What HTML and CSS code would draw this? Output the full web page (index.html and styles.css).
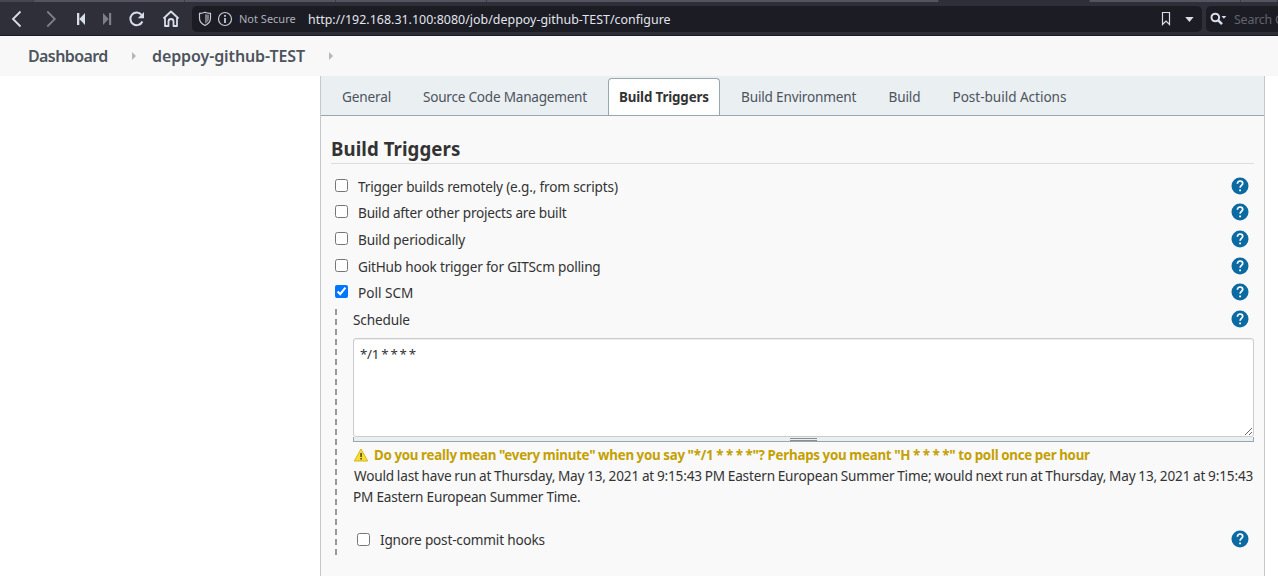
FILE: index.html
```html
<!DOCTYPE html>
<html lang="en">
<head>
<meta charset="utf-8">
<title>deppoy-github-TEST Config</title>
<link rel="stylesheet" href="styles.css">
</head>
<body>
<svg class="defs" width="0" height="0">
  <symbol id="help" viewBox="0 0 18 18"><circle cx="9" cy="9" r="8.5" fill="#0b6aa2"/><path d="M6.400 6.700C6.400 5.100 7.500 4 9.100 4s2.600 1 2.600 2.400c0 1.900-2.600 2.200-2.600 4.300" fill="none" stroke="#fff" stroke-width="1.700"/><path d="M8.200 12.400h1.800v1.800H8.200z" fill="#fff"/></symbol>
</svg>
<header class="browser">
  <div class="tabstrip"><i class="tab t1"></i><i class="tab t2"></i><i class="tab t3"></i><i class="tab t4"></i><i class="tab t5"></i><i class="tab active"></i><i class="tab t7"></i><i class="tab t8"></i></div>
  <div class="toolbar">
    <svg class="nav" width="192" height="26" viewBox="0 6 192 26" fill="none">
      <path d="M20.500 11.500l-7.500 7.500 7.500 7.500" stroke="#d8dee9" stroke-width="1.800"/>
      <path d="M47.300 11.500l7.500 7.500-7.500 7.500" stroke="#7c7f88" stroke-width="1.800"/>
      <path d="M77 13h2.300v12H77zM85 13v12l-5.700-6z" fill="#d8dee9"/>
      <path d="M109 13h2.200v12H109zM103 13v12l5.700-6z" fill="#7c7f88"/>
      <path d="M141.500 14.800A6.300 6.300 0 1 0 142.400 21.500" stroke="#d8dee9" stroke-width="2"/>
      <path d="M144 12v6.200h-6.200z" fill="#d8dee9"/>
      <path d="M163.500 18.500l7.500-7 7.500 7M165 18v8h3.500v-4.500a2.500 2.500 0 0 1 5 0V26h3.500v-8" stroke="#d8dee9" stroke-width="1.800" stroke-linejoin="round"/>
    </svg>
    <div class="address">
      <svg width="47" height="26" viewBox="192 6 47 26" fill="none">
        <path d="M199.500 13.300c2 .1 3.800-.2 5.500-1 1.700.8 3.500 1.100 5.500 1v5c0 3.200-2 5.500-5.500 7.200-3.500-1.700-5.500-4-5.500-7.200z" stroke="#c4c9d3" stroke-width="1.200"/>
        <path d="M205 14c1.300.5 2.500.8 4 .8v3.500c0 2.400-1.300 4-4 5.500z" fill="#777b85"/>
        <circle cx="225" cy="19" r="6.500" stroke="#c4c9d3" stroke-width="1.200"/><path d="M224.200 15h1.600v1.700h-1.600zM224.200 18h1.600v5h-1.600z" fill="#d8dee9"/>
      </svg>
      <span class="secure">Not Secure</span>
      <span class="url">http://192.168.31.100:8080/job/deppoy-github-TEST/configure</span>
      <svg class="marks" width="46" height="26" viewBox="1156 6 46 26" fill="none"><path d="M1162.500 12.500h7v12l-3.500-3.500-3.500 3.500z" stroke="#d8dee9" stroke-width="1.200"/><path d="M1185.200 17h8.400l-4.200 5z" fill="#d8dee9"/></svg>
    </div>
    <div class="search">
      <svg width="28" height="26" viewBox="1206 6 28 26" fill="none"><circle cx="1215.300" cy="17.500" r="3.800" stroke="#d8dee9" stroke-width="2"/><path d="M1218 20.200l4 4" stroke="#d8dee9" stroke-width="2.400"/><path d="M1221.500 16h4.800l-2.400 2.700z" fill="#d8dee9"/></svg>
      <span>Search Google</span>
    </div>
  </div>
</header>
<nav class="crumbs"><a class="c1">Dashboard</a><i class="arrow"></i><a class="c2">deppoy-github-TEST</a><i class="arrow"></i></nav>
<main class="panel">
  <div class="tabs"><a class="g">General</a><a class="s">Source Code Management</a><a class="current">Build Triggers</a><a class="e">Build Environment</a><a class="b">Build</a><a class="p">Post-build Actions</a></div>
  <section class="content">
    <h1><span>Build Triggers</span></h1>
    <div class="row"><input type="checkbox"><label class="l1">Trigger builds remotely (e.g., from scripts)</label><svg class="help"><use href="#help"/></svg></div>
    <div class="row"><input type="checkbox"><label class="l2">Build after other projects are built</label><svg class="help"><use href="#help"/></svg></div>
    <div class="row"><input type="checkbox"><label class="l3">Build periodically</label><svg class="help"><use href="#help"/></svg></div>
    <div class="row"><input type="checkbox"><label class="l4">GitHub hook trigger for GITScm polling</label><svg class="help"><use href="#help"/></svg></div>
    <div class="row"><input type="checkbox" checked><label class="l5">Poll SCM</label><svg class="help"><use href="#help"/></svg></div>
    <div class="nested">
      <svg class="rail" width="2" height="246"><path d="M1 0v246" stroke="#999" stroke-width="2" stroke-dasharray="6 4"/></svg>
      <div class="fields">
        <div class="row schedule"><label class="l6">Schedule</label><svg class="help"><use href="#help"/></svg></div>
        <textarea spellcheck="false">*/1 * * * *</textarea>
        <div class="grip"><i></i></div>
        <div class="warning"><svg width="16" height="14" viewBox="0 0 16 14"><path d="M8 1L14.700 13H1.300z" fill="#f6df32" stroke="#d8b51c" stroke-linejoin="round"/><path d="M7.300 5h1.600v4H7.300zM7.300 10h1.600v1.500H7.300z" fill="#514815"/></svg><span>Do you really mean "every minute" when you say "*/1 * * * *"? Perhaps you meant "H * * * *" to poll once per hour</span></div>
        <div class="result"><span class="r1">Would last have run at Thursday, May 13, 2021 at 9:15:43 PM Eastern European Summer Time; would next run at Thursday, May 13, 2021 at 9:15:43</span><br><span class="r2">PM Eastern European Summer Time.</span></div>
        <div class="row ignore"><input type="checkbox"><label class="l7">Ignore post-commit hooks</label><svg class="help"><use href="#help"/></svg></div>
      </div>
    </div>
  </section>
</main>
</body>
</html>
```
FILE: styles.css
```css
* { box-sizing: border-box; }
body { margin: 0; width: 1278px; height: 576px; overflow: hidden; background: #fff; color: #333; font: 13.6px/20px "Noto Sans", sans-serif; }
.defs { display: block; position: absolute; }
.browser { height: 36px; background: #2f2f39; border-bottom: 1px solid #1b1c25; }
.tabstrip { display: flex; height: 2px; }
.tab { background: #53545f; border-right: 1px solid #3b3c47; }
.t1 { width: 34px; background: #454650; } .t2 { width: 151px; } .t3 { width: 151px; } .t4 { width: 151px; } .t5 { width: 452px; }
.tab.active { width: 151px; background: #2f2f39; } .t7 { width: 151px; } .t8 { flex: 1; }
.toolbar { display: flex; height: 34px; padding-top: 4px; }
.toolbar svg { display: block; flex: none; }
.address { display: flex; align-items: center; width: 1010px; height: 26px; border-radius: 5px; background: #1c1c25; }
.secure { width: 69px; color: #adb0b9; font-size: 11px; white-space: nowrap; }
.url { padding-top: 2px; color: #e2e5ec; font-size: 12.4px; letter-spacing: .03px; white-space: nowrap; }
.marks { margin-left: auto; }
.search { display: flex; align-items: center; flex: 1; margin-left: 4px; height: 26px; border-radius: 5px 0 0 5px; background: #1c1c25; overflow: hidden; color: #62636c; font-size: 12.4px; letter-spacing: -.2px; white-space: nowrap; }
.search span { padding-top: 2px; }
.crumbs { display: flex; align-items: center; height: 40px; padding-left: 28px; background: #f8f8f8; color: #4d545d; font-size: 16px; font-weight: 600; }
.crumbs a { white-space: nowrap; }
.c1 { width: 104px; letter-spacing: -.6px; } .c2 { width: 177px; margin-left: 16px; letter-spacing: -.1px; }
.arrow { border: 4px solid transparent; border-left-color: #b5b8ba; border-right: 0; }
.panel { width: 945px; height: 500px; margin-left: 320px; border: solid #c6c9cb; border-width: 0 1px; background: #f9f9f9; }
.tabs { display: flex; height: 40px; padding-top: 2px; background: #eaeff2; border-bottom: 1px solid #98a6ad; color: #4d545d; line-height: 38px; white-space: nowrap; }
.g { width: 81px; margin-left: 21px; letter-spacing: -.15px; } .s { width: 185px; letter-spacing: -.24px; }
.current { width: 112px; height: 37px; padding-left: 10px; border: 1px solid #98a6ad; border-bottom: 0; border-radius: 4px 4px 0 0; background: #fff; color: #333; font-size: 13.333px; font-weight: bold; line-height: 36px; letter-spacing: -.14px; }
.e { width: 147.5px; margin-left: 21px; letter-spacing: -.18px; } .b { width: 64px; letter-spacing: -.15px; }
.p { letter-spacing: -.04px; }
.content { padding: 20px 10px 0; }
h1 { height: 28px; margin: 0 0 9.6px; border-bottom: 1px solid #ddd; font-size: 18.667px; line-height: 26px; letter-spacing: .06px; }
.row { display: flex; align-items: center; height: 26.6px; padding: 0 5px 0 4px; }
.row input { width: 13px; height: 13px; margin: 0 10px 3px 0; }
.row label { white-space: nowrap; }
.l1 { letter-spacing: -.17px; } .l2 { letter-spacing: -.21px; } .l3 { letter-spacing: -.13px; } .l4 { letter-spacing: -.2px; }
.l6 { letter-spacing: -.15px; } .l7 { letter-spacing: -.18px; }
.help { width: 18px; height: 18px; margin-left: auto; margin-bottom: 2px; }
.nested { display: flex; padding-left: 4px; }
.rail { flex: none; margin-top: 2px; }
.fields { width: 901px; margin-left: 16px; }
.schedule { padding-left: 0; }
textarea { display: block; width: 901px; height: 99px; margin: 4.6px 0 0; padding: 5px 6px; border: 1px solid #ccc; border-radius: 3px; background: #fff; box-shadow: inset 0 1px 1px #00000013; color: #333; font: 13.333px/20px "Noto Sans", sans-serif; letter-spacing: -.3px; word-spacing: -1px; outline: 0; resize: vertical; }
.grip { display: flex; justify-content: center; height: 5px; border: solid #98a6ad; border-width: 0 1px 1px; background: #eaeff2; }
.grip i { width: 27px; height: 3px; margin-top: 1px; border: solid #898e8b; border-width: 1px 0; }
.warning { display: flex; align-items: center; height: 20.4px; margin-top: 3px; color: #c4a000; font-size: 13.333px; font-weight: bold; letter-spacing: -.24px; word-spacing: -.45px; white-space: nowrap; }
.warning svg { margin-right: 5px; flex: none; }
.result { line-height: 21px; white-space: nowrap; }
.r1 { padding-left: 1px; letter-spacing: -.16px; word-spacing: -.58px; }
.r2 { letter-spacing: -.21px; }
.ignore { margin-top: 19.6px; padding-left: 4px; }
.ignore input { margin-bottom: 2px; }
```
